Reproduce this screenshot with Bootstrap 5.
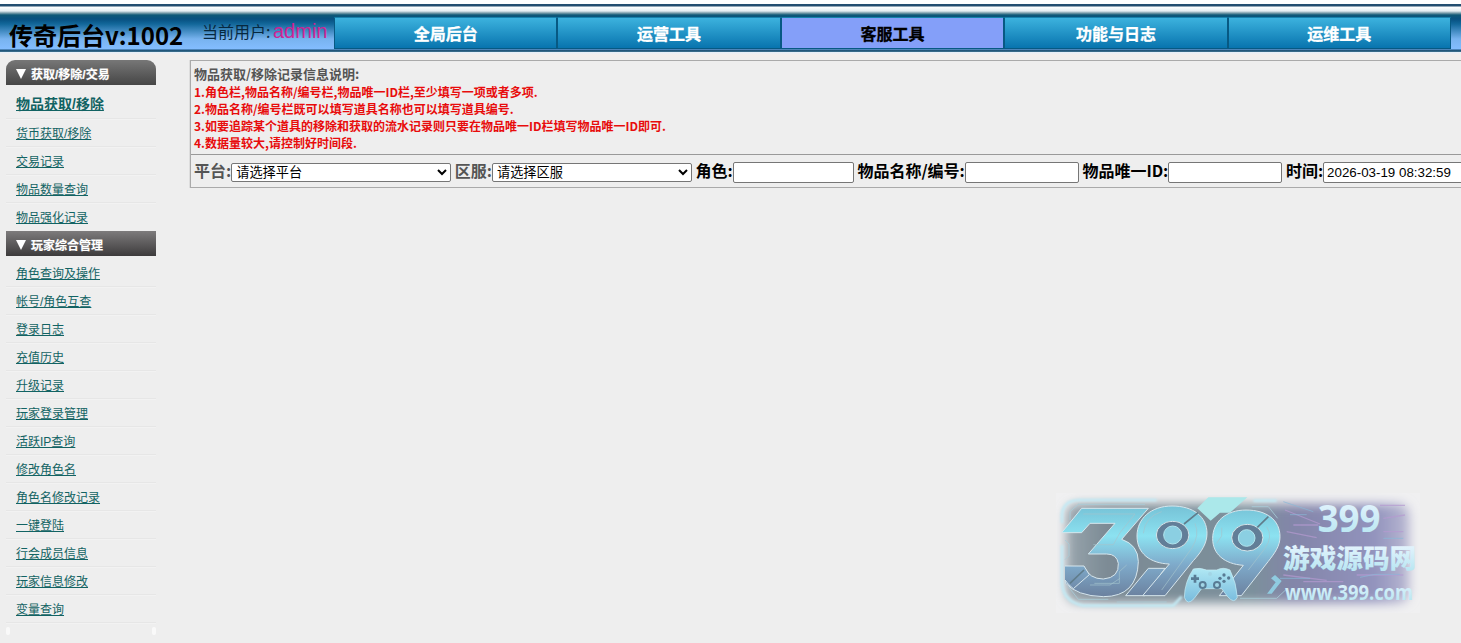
<!DOCTYPE html>
<html lang="zh-CN">
<head>
<meta charset="utf-8">
<title>传奇后台</title>
<link href="https://cdn.jsdelivr.net/npm/bootstrap@5.3.0/dist/css/bootstrap.min.css" rel="stylesheet">
<style>
body{background:#eee;font-family:"Liberation Sans","Noto Sans CJK SC",sans-serif;color:#000;height:643px;overflow:hidden}
.topbar,.panel{font-family:"Noto Sans CJK SC",sans-serif}
.topbar{height:52px;padding-top:17px;background:linear-gradient(180deg,#fff 0 4px,#234e70 4px 6px,#fff 7px,#e3edf2 11px,#7a9eab 13px,#0d5877 15px,#075080 19px,#12679a 24px,#78b3ef 39px,#83bdff 49px,#174d73 50px,#407490 52px)}
.glow{height:6px;background:linear-gradient(#e4effa,#f2eeec 50%,#eee)}
.brand{width:334px;height:32px;padding-left:9px;line-height:36px;white-space:nowrap}
.brand b{font-size:24px;width:193px}
.brand .who{font-size:16px;line-height:29px;color:#07283f;width:71px}
.brand .name{font:20px/29px "Liberation Sans",sans-serif;color:#cf2394}
.tabs{width:1117px;height:32px}
.tabs a{border-left:1px solid #075983;border-right:1px solid #075983;border-bottom:1px solid #075983;border-top:1px solid #1582ac;background:linear-gradient(#3cb2de,#0874ae);color:#fff;font:bold 16px/30px "Noto Sans CJK SC",sans-serif;-webkit-text-stroke:.3px;text-align:center;text-decoration:none;height:32px}
.tabs a.on{background:#849ff9;color:#000}
.side{width:150px;margin-left:6px;margin-top:2px;font-size:12px}
.side h2{font-size:12px;font-weight:bold;color:#fff;-webkit-text-stroke:.2px;height:25px;line-height:30px;margin:0;padding-left:9px;background:linear-gradient(#7d7b7c,#3d3b3c)}
.side h2 svg{margin-right:4px;vertical-align:0}
.side h2.first{border-radius:9px 9px 0 0;background:linear-gradient(#777,#464646)}
.side a{display:block;height:28px;line-height:30px;padding-left:10px;color:#126363;text-decoration:underline;border-bottom:1px solid #e6e6e6;box-shadow:0 1px #f2f2f2}
.side a.big{font-size:14px;font-weight:bold;height:34px;line-height:39px}
.side a.group-last{border-color:transparent}
.side a.first-link{height:31px;line-height:36px}
.foot-dots i{width:4px;height:8px;border-radius:2px;background:#f9f9f9}
.panel{margin-left:34px;margin-top:2px;width:1290px;flex:none;border:1px solid #aaa;height:128px;box-shadow:-1px 0 #ddd}
.notes{height:94px;padding:4px 3px;border-bottom:1px solid #999;font-weight:bold}
.notes h1{font-size:13px;font-weight:bold;line-height:18px;margin:0;color:#555}
.notes p{font-size:12px;line-height:17px;margin:0;color:#e80c0c}
.filters{height:33px;padding:2px 0 0 3px;font-size:16px;font-weight:bold;white-space:nowrap}
.filters>*{flex-shrink:0}
.filters label{line-height:28px;height:33px}
.filters input,.filters select{font:13.33px "Liberation Sans","Noto Sans CJK SC",sans-serif;border:1px solid #767676;border-radius:2px;background:#fff;color:#000;height:21px;padding:1px 3px;margin:0 3.6px 0 0}
.filters select{height:19px;padding:0;font-size:13.2px}
.gray{color:#555}
.mark-399{left:1056px;top:493px}
</style>
<script src="https://cdn.jsdelivr.net/npm/bootstrap@5.3.0/dist/js/bootstrap.bundle.min.js"></script>
</head>
<body>
<header class="topbar d-flex">
  <div class="brand d-flex flex-shrink-0"><b>传奇后台v:1002</b><span class="who">当前用户:</span><span class="name">admin</span></div>
  <nav class="tabs d-flex"><a class="flex-fill w-100" href="#">全局后台</a><a class="flex-fill w-100" href="#">运营工具</a><a class="flex-fill w-100 on" href="#">客服工具</a><a class="flex-fill w-100" href="#">功能与日志</a><a class="flex-fill w-100" href="#">运维工具</a></nav>
</header>
<div class="glow"></div>
<main class="d-flex align-items-start">
  <aside class="side flex-shrink-0">
    <h2 class="first"><svg width="12" height="10"><path d="M1 0h10L6 10z" fill="#fff"/></svg>获取/移除/交易</h2>
    <a class="big" href="#">物品获取/移除</a><a href="#">货币获取/移除</a><a href="#">交易记录</a><a href="#">物品数量查询</a><a class="group-last" href="#">物品强化记录</a>
    <h2><svg width="12" height="10"><path d="M1 0h10L6 10z" fill="#fff"/></svg>玩家综合管理</h2>
    <a class="first-link" href="#">角色查询及操作</a><a href="#">帐号/角色互查</a><a href="#">登录日志</a><a href="#">充值历史</a><a href="#">升级记录</a><a href="#">玩家登录管理</a><a href="#">活跃IP查询</a><a href="#">修改角色名</a><a href="#">角色名修改记录</a><a href="#">一键登陆</a><a href="#">行会成员信息</a><a href="#">玩家信息修改</a><a href="#">变量查询</a>
    <div class="foot-dots d-flex justify-content-between pt-1"><i></i><i></i></div>
  </aside>
  <section class="panel">
    <div class="notes"><h1>物品获取/移除记录信息说明:</h1><p>1.角色栏,物品名称/编号栏,物品唯一ID栏,至少填写一项或者多项.</p><p>2.物品名称/编号栏既可以填写道具名称也可以填写道具编号.</p><p>3.如要追踪某个道具的移除和获取的流水记录则只要在物品唯一ID栏填写物品唯一ID即可.</p><p>4.数据量较大,请控制好时间段.</p></div>
    <form class="filters d-flex align-items-center">
      <label class="gray">平台:</label><select style="width:220px"><option>请选择平台</option></select>
      <label class="gray">区服:</label><select style="width:200px"><option>请选择区服</option></select>
      <label>角色:</label><input style="width:121px"><label>物品名称/编号:</label><input style="width:114px"><label>物品唯一ID:</label><input style="width:114px"><label>时间:</label><input style="width:150px" value="2026-03-19 08:32:59">
    </form>
  </section>
</main>
<svg class="mark-399 position-absolute" width="364" height="120" viewBox="48 39 1092 360">
  <defs>
    <linearGradient id="ice" x1="0" y1="70" x2="0" y2="350" gradientUnits="userSpaceOnUse"><stop stop-color="#74bfd4"/><stop offset=".35" stop-color="#8ce2f1"/><stop offset=".65" stop-color="#7fabcb"/><stop offset="1" stop-color="#6b819f"/></linearGradient>
    <linearGradient id="base"><stop stop-color="#9aa6ae"/><stop offset=".12" stop-color="#7b8a94"/><stop offset=".55" stop-color="#7c909c"/><stop offset=".66" stop-color="#8385a9"/><stop offset=".9" stop-color="#9293bd"/><stop offset="1" stop-color="#b9b8d2"/></linearGradient>
    <linearGradient id="txt" x1="0" y1="0" x2="0" y2="1"><stop stop-color="#edf6ff"/><stop offset="1" stop-color="#afe4f0"/></linearGradient>
    <linearGradient id="pad" x1="0" y1="0" x2="0" y2="1"><stop stop-color="#b0e8f4"/><stop offset="1" stop-color="#78bbdd"/></linearGradient>
    <filter id="soft" x="-10%" y="-20%" width="120%" height="140%"><feGaussianBlur stdDeviation="16"/></filter>
    <filter id="thin"><feGaussianBlur stdDeviation="3"/></filter>
  </defs>
  <rect x="48" y="39" width="1092" height="360" fill="#f0f0f1"/>
  <rect x="78" y="72" width="1030" height="296" rx="34" fill="url(#base)" filter="url(#soft)"/>
  <g fill="none" stroke="#c2eaf5" stroke-width="8" filter="url(#thin)"><path d="M66 130V100Q72 62 115 60H350M66 195V310Q70 365 130 377H400L425 350M640 62H710"/></g>
  <g fill="none" stroke="#a7cbd7" stroke-width="2.5"><path d="M90 120v-25l25-22h200M75 180l12 12v35l-12 12M85 320l30 38h90M635 80h50l28 35M230 366h150M600 355h110l30-28"/></g>
  <path d="M705 285l20 18-30 38h-14l26-34-14-12z" fill="#8fcbe0"/>
  <g fill="none" stroke="#b59ad0" stroke-width="4" opacity=".7"><path d="M735 90l105 42M760 135h75M1020 76h75M1030 155h60M740 155l90 18M730 285l130 16M950 285h140M790 305h120M1030 115l65-10"/></g>
  <g fill="none" stroke="#89b8d7" stroke-width="3" opacity=".7"><path d="M730 65l90 30M750 104h50M1030 175h60M720 295h90M960 292l45-9h75"/></g>
  <path d="M472 85L505 52H622L570 98H540L512 122z" fill="#abe8ea"/>
  <g fill="url(#ice)" stroke="#d6e6ed" stroke-width="3" stroke-linejoin="round">
    <path d="M65 158L125 85H325L245 178Q295 195 295 245Q292 350 190 350Q110 348 75 308L132 260Q148 297 190 297Q238 293 235 250Q230 222 200 222H145L225 130H150L125 158z"/>
    <path d="M75 258H132L148 284 100 326Q82 312 75 300"/>
    <path d="M325 265H375L315 347H257z"/>
    <path fill-rule="evenodd" d="M396 78C460 78 501 110 501 160C501 190 485 215 460 242L375 347H308L388 252C330 250 291 220 291 168C291 115 334 78 396 78zM398 124A49 41 0 1 0 398 206A49 41 0 1 0 398 124"/>
    <path fill-rule="evenodd" d="M618 90C680 90 720 120 720 170C720 198 705 218 685 244L604 347H538L610 256C553 252 518 222 518 176C518 125 558 90 618 90zM622 133A47 40 0 1 0 622 213A47 40 0 1 0 622 133"/>
  </g>
  <g fill="#627e98"><ellipse cx="398" cy="165" rx="46" ry="39"/><ellipse cx="622" cy="173" rx="44" ry="38"/></g>
  <g fill="#8bcfe2" stroke="#b2e5ee" stroke-width="3"><circle cx="398" cy="165" r="27"/><circle cx="620" cy="174" r="25"/></g>
  <path d="M432 132L474 98M652 142L685 110M90 310L132 270" stroke="#607d8c" stroke-width="5"/>
  <path d="M130 102H285L240 158L220 194H160M310 160Q315 110 365 95M465 130Q480 165 455 205L365 330M680 140Q700 170 675 205L625 270M260 255l-22 20v35h-75M530 190l15-22v-25M150 315h60l30-20" fill="none" stroke="#a5c4cd" stroke-width="2"/>
  <path d="M460 267Q480 262 500 270H530Q550 260 570 270Q590 310 592 352Q583 373 563 350L545 326H485L462 356Q442 378 433 352Q434 305 460 267z" fill="url(#pad)" stroke="#c9edf4" stroke-width="2"/>
  <path d="M465 284v24M453 296h24" stroke="#587b94" stroke-width="8"/>
  <g fill="#587b94"><circle cx="552" cy="285" r="5"/><circle cx="566" cy="294" r="5"/><circle cx="540" cy="295" r="5"/><circle cx="552" cy="304" r="5"/><circle cx="488" cy="315" r="12"/><circle cx="531" cy="315" r="12"/></g>
  <g fill="#a2d5e5"><circle cx="488" cy="315" r="6"/><circle cx="531" cy="315" r="6"/><circle cx="510" cy="282" r="6"/></g>
  <g fill="url(#txt)" font-family="Open Sans, Noto Sans CJK SC, sans-serif" font-weight="700">
    <text x="833" y="156" font-size="110">399</text>
    <text x="729" y="264" font-size="80" font-weight="900">游戏源码网</text>
    <text x="735" y="360" font-size="66" textLength="384" lengthAdjust="spacingAndGlyphs">www.399.com</text>
  </g>
</svg>
</body>
</html>
